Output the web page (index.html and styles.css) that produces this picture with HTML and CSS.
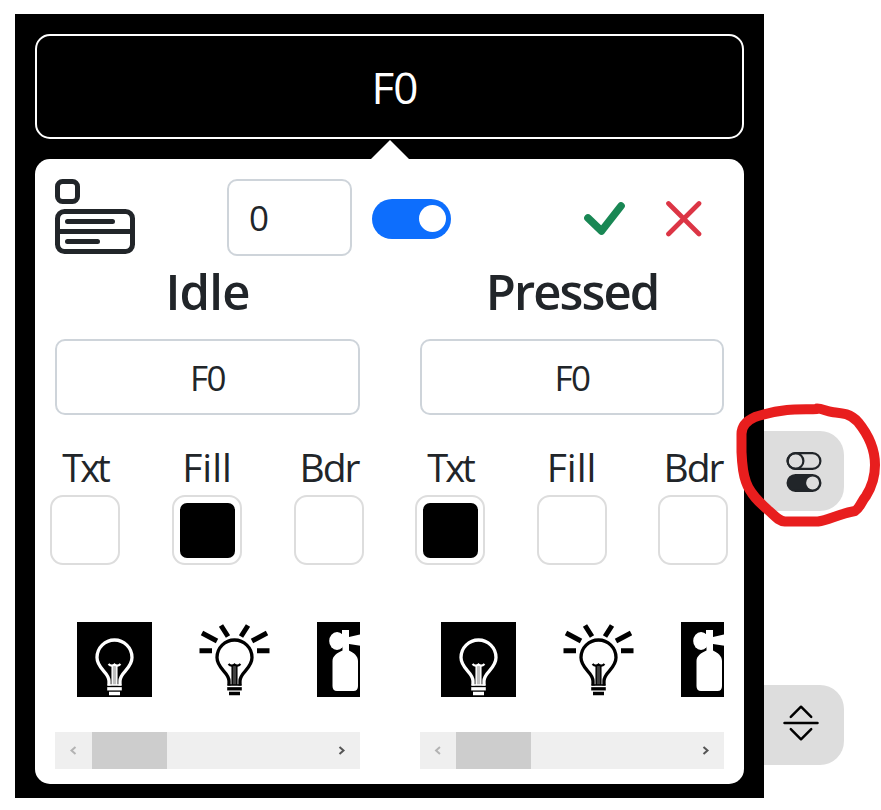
FILE: index.html
```
<!DOCTYPE html>
<html lang="en">
<head>
<meta charset="utf-8">
<title>Button editor</title>
<link rel="stylesheet" href="styles.css">
</head>
<body>
<svg class="defs" aria-hidden="true">
  <defs>
    <g id="bulb" fill="none" stroke="currentColor">
      <path d="M32 63.500 V59 C32 50 20 47 20 35.500 A17.500 17.500 0 0 1 55 35.500 C55 47 43 50 43 59 V63.500" stroke-width="3.300"/>
      <path d="M31.500 42 Q34.500 45 37.500 42.500 Q40.500 45 43.500 42" stroke-width="2.200"/>
      <path d="M37.500 43.500 V63" stroke-width="5.500" opacity=".75"/>
      <path d="M35.200 43 V63 M39.800 43 V63" stroke-width="1.300"/>
      <path d="M30.500 63 H44.500" stroke-width="1.500"/>
      <path d="M30.200 66.800 H44.800" stroke-width="3.300"/>
      <path d="M32 71.500 H43" stroke-width="3.500"/>
    </g>
    <g id="rays" stroke="currentColor" stroke-width="5">
      <path d="M2.500 28.800 H15 M60 28.800 H72.500 M5 11 L20 19 M70 11 L55 19 M24 3.500 L31 14.500 M51 3.500 L44 14.500"/>
    </g>
    <g id="extinguisher" fill="currentColor">
      <ellipse cx="20" cy="19" rx="7.800" ry="9"/>
      <path d="M25 8 H32 V15 L45 12 V24 L32 22 V28.500 C37 31 41 34 41 39 V64 Q41 69 36.500 69 H20 Q15.500 69 15.500 64 V39 C15.500 34 20 31 25.500 28.500 V22 L20 19 L20 10.500 L25 12 Z"/>
    </g>
  </defs>
</svg>
<div class="workspace">
  <main class="panel">
    <button class="preview">F0</button>
    <section class="popover">
      <header class="toolbar">
        <svg class="layout-icon" viewBox="0 0 80 75" fill="none" stroke="#212529" stroke-width="5">
          <rect x="2.500" y="2.500" width="20" height="20" rx="5"/>
          <rect x="2.500" y="32.500" width="75" height="40" rx="7"/>
          <path d="M2.500 52.500 H77.500"/>
          <path d="M12.500 42.500 H57.500 M12.500 62.500 H42.500" stroke-linecap="round"/>
        </svg>
        <div class="number">0</div>
        <div class="switch"><span></span></div>
        <svg class="check" viewBox="0 0 41 34"><path d="M4 16 L17.500 29 L37 4" fill="none" stroke="#198754" stroke-width="7.600" stroke-linecap="round" stroke-linejoin="round"/></svg>
        <svg class="cross" viewBox="0 0 36 36"><path d="M2.500 2.500 L33 33 M33 2.500 L2.500 33" stroke="#dc3545" stroke-width="4.700" stroke-linecap="round"/></svg>
      </header>
      <div class="states">
        <section class="state">
          <h2>Idle</h2>
          <div class="field">F0</div>
          <div class="colors">
            <div class="color"><span class="txt">Txt</span><i class="swatch"></i></div>
            <div class="color"><span>Fill</span><i class="swatch black"></i></div>
            <div class="color"><span class="bdr">Bdr</span><i class="swatch"></i></div>
          </div>
          <div class="images">
            <svg class="dark" viewBox="0 0 75 75"><use class="soft" href="#bulb"/></svg>
            <svg viewBox="0 0 75 75"><g class="soft"><use href="#bulb"/><use href="#rays"/></g></svg>
            <svg class="dark" viewBox="0 0 75 75"><use class="soft" href="#extinguisher"/></svg>
          </div>
          <div class="scrollbar">
            <svg class="arrow off" viewBox="0 0 37 37"><path d="M20.500 15 L16.500 18.500 L20.500 22"/></svg>
            <div class="thumb"></div>
            <svg class="arrow end" viewBox="0 0 37 37"><path d="M16.500 15 L20.500 18.500 L16.500 22"/></svg>
          </div>
        </section>
        <section class="state">
          <h2 class="tight">Pressed</h2>
          <div class="field">F0</div>
          <div class="colors">
            <div class="color"><span class="txt">Txt</span><i class="swatch black"></i></div>
            <div class="color"><span>Fill</span><i class="swatch"></i></div>
            <div class="color"><span class="bdr">Bdr</span><i class="swatch"></i></div>
          </div>
          <div class="images">
            <svg class="dark" viewBox="0 0 75 75"><use class="soft" href="#bulb"/></svg>
            <svg viewBox="0 0 75 75"><g class="soft"><use href="#bulb"/><use href="#rays"/></g></svg>
            <svg class="dark" viewBox="0 0 75 75"><use class="soft" href="#extinguisher"/></svg>
          </div>
          <div class="scrollbar">
            <svg class="arrow off" viewBox="0 0 37 37"><path d="M20.500 15 L16.500 18.500 L20.500 22"/></svg>
            <div class="thumb"></div>
            <svg class="arrow end" viewBox="0 0 37 37"><path d="M16.500 15 L20.500 18.500 L16.500 22"/></svg>
          </div>
        </section>
      </div>
    </section>
  </main>
  <aside class="tabs">
    <div class="tab">
      <svg viewBox="0 0 80 80" fill="none" stroke="#212529" stroke-width="2.200">
        <rect x="23.600" y="22.100" width="32.800" height="15.800" rx="7.900"/>
        <circle cx="31.500" cy="30" r="7.900"/>
        <rect x="23.600" y="44" width="32.800" height="15.800" rx="7.900" fill="#212529"/>
        <circle cx="48.600" cy="51.900" r="6.500" fill="#ddd" stroke="none"/>
      </svg>
    </div>
    <div class="tab">
      <svg viewBox="0 0 80 80" fill="none" stroke="#000" stroke-width="2.500" stroke-linecap="round" stroke-linejoin="round">
        <path d="M26.800 31.800 L37 21.700 L47.200 31.800 M20.500 38 H53.500 M26.800 44.200 L37 54.300 L47.200 44.200"/>
      </svg>
    </div>
  </aside>
</div>
<svg class="marker" viewBox="725 390 156 150">
  <path d="M817 409 C810 409.500 797 409 787 410 C778 411 764 414 755 417 C746 421 741.500 427 741.500 434 V452 C742 464 743 474 746 482 C750 494 760 503 768 510 C774 515 778 521 785 521.500 H818 C829 520 838 514 855 511 C860 508 861 502 866 496 C871 488 875 477 875 465 C875 447 867 433 858 422 C849 412 838 413 832 412 C826 411 822 408.500 817 408.500"/>
</svg>
</body>
</html>
```
FILE: styles.css
```
* { box-sizing: border-box; }
body {
  margin: 0;
  background: #fff;
  color: #212529;
  font-family: "Open Sans", "Noto Sans", sans-serif;
}
svg { display: block; flex: none; }
.defs { width: 0; height: 0; }
.workspace { display: flex; padding: 14px 0 0 15px; }
.panel {
  width: 749px;
  height: 784px;
  padding: 20px;
  background: #000;
}
.preview {
  display: flex;
  align-items: center;
  justify-content: center;
  width: 709px;
  height: 105px;
  margin: 0 0 20px;
  padding: 0 0 0 10px;
  border: 2px solid #fff;
  border-radius: 15px;
  background: #000;
  color: #fff;
  font: 44px/60px "Open Sans", sans-serif;
  letter-spacing: -1px;
}
.popover {
  position: relative;
  height: 625px;
  padding: 20px 20px 15px;
  border-radius: 15px;
  background: #fff;
}
.popover::before {
  content: "";
  position: absolute;
  top: -19px;
  left: 336px;
  border: solid transparent;
  border-width: 0 19px 19px;
  border-bottom-color: #fff;
}
.toolbar { display: flex; align-items: center; height: 77px; }
.layout-icon { width: 80px; height: 75px; align-self: flex-start; }
.number {
  width: 125px;
  height: 77px;
  margin-left: 92px;
  padding: 0 20px;
  border: 2px solid #ced4da;
  border-radius: 10px;
  font-size: 35px;
  line-height: 74px;
}
.switch {
  display: flex;
  justify-content: flex-end;
  width: 79px;
  height: 40px;
  margin: 2px 0 0 20px;
  padding: 6.500px 5px;
  border-radius: 20px;
  background: #0d6efd;
}
.switch span { width: 27px; height: 27px; border-radius: 50%; background: #fff; }
.check { width: 41px; height: 34px; margin: 2px 0 0 133px; }
.cross { width: 36px; height: 36px; margin: 3px 0 0 41px; }
.states { display: grid; grid-template-columns: 305px 304px; column-gap: 60px; }
.state { min-width: 0; }
h2 {
  height: 83px;
  margin: 0;
  font-size: 49px;
  font-weight: 600;
  line-height: 70px;
  letter-spacing: -.8px;
  text-align: center;
}
.tight { letter-spacing: -1.900px; }
.field {
  height: 76px;
  border: 2px solid #ced4da;
  border-radius: 10px;
  font-size: 35px;
  line-height: 74px;
  letter-spacing: -1.500px;
  text-align: center;
}
.colors { display: flex; justify-content: space-between; margin: 25px -4px 0 -5px; }
.color { width: 70px; display: flex; flex-direction: column; align-items: center; }
.color span { height: 55px; font-size: 39px; line-height: 54px; white-space: nowrap; }
.color .txt { letter-spacing: -3px; font-size: 38px; padding-left: 0; }
.color .bdr { letter-spacing: -2px; }
.swatch {
  width: 70px;
  height: 70px;
  padding: 6px;
  border: 2px solid #ddd;
  border-radius: 13px;
}
.black::before {
  content: "";
  display: block;
  width: 55px;
  height: 55px;
  border-radius: 7px;
  background: #000;
}
.images {
  display: flex;
  gap: 45px;
  margin-top: 57px;
  padding-left: 22px;
  overflow: hidden;
}
.state + .state .images { padding-left: 21px; }
.images svg { width: 75px; height: 75px; color: #000; }
.images .dark { background: #000; color: #fff; }
.soft { filter: blur(.7px); }
.scrollbar { display: flex; height: 37px; margin-top: 35px; background: #efefef; }
.state + .state .arrow.off { width: 36px; }
.thumb { width: 75px; background: #cdcdcd; }
.arrow { width: 37px; height: 37px; fill: none; stroke: #555; stroke-width: 2; }
.arrow.off { stroke: #b3b3b3; }
.end { margin-left: auto; }
.tabs { display: flex; flex-direction: column; gap: 174px; padding-top: 417px; }
.tab {
  width: 80px;
  height: 80px;
  border-radius: 0 24px 24px 0;
  background: #ddd;
}
.tab svg { width: 80px; height: 80px; }
.marker {
  position: absolute;
  top: 390px;
  left: 725px;
  width: 156px;
  height: 150px;
  fill: none;
  stroke: #e81e1e;
  stroke-width: 10;
  stroke-linecap: round;
  stroke-linejoin: round;
}
```
